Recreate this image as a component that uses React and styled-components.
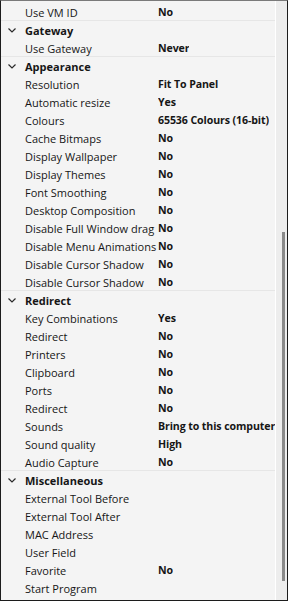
import React from "react";
import styled, { createGlobalStyle } from "styled-components";

const GlobalStyle = createGlobalStyle`
  html, body {
    margin: 0;
    padding: 0;
    background: #f4f4f4;
  }
  * {
    box-sizing: border-box;
  }
`;

const groups = [
  { title: null, rows: [["Use VM ID", "No"]] },
  { title: "Gateway", rows: [["Use Gateway", "Never"]] },
  {
    title: "Appearance",
    rows: [
      ["Resolution", "Fit To Panel"],
      ["Automatic resize", "Yes"],
      ["Colours", "65536 Colours (16-bit)"],
      ["Cache Bitmaps", "No"],
      ["Display Wallpaper", "No"],
      ["Display Themes", "No"],
      ["Font Smoothing", "No"],
      ["Desktop Composition", "No"],
      ["Disable Full Window drag", "No"],
      ["Disable Menu Animations", "No"],
      ["Disable Cursor Shadow", "No"],
      ["Disable Cursor Shadow", "No"],
    ],
  },
  {
    title: "Redirect",
    rows: [
      ["Key Combinations", "Yes"],
      ["Redirect", "No"],
      ["Printers", "No"],
      ["Clipboard", "No"],
      ["Ports", "No"],
      ["Redirect", "No"],
      ["Sounds", "Bring to this computer"],
      ["Sound quality", "High"],
      ["Audio Capture", "No"],
    ],
  },
  {
    title: "Miscellaneous",
    rows: [
      ["External Tool Before", ""],
      ["External Tool After", ""],
      ["MAC Address", ""],
      ["User Field", ""],
      ["Favorite", "No"],
      ["Start Program", ""],
    ],
  },
];

export default function App() {
  return (
    <>
      <GlobalStyle />
      <Frame>
        <Grid>
          {groups.map((group, gi) => (
            <Group key={gi} $first={gi === 0}>
              {group.title && (
                <HeaderRow>
                  <Chevron viewBox="0 0 8 5" width="8" height="5">
                    <polyline
                      points="0.5,0.5 4,4 7.5,0.5"
                      fill="none"
                      stroke="#2a2a2a"
                      strokeWidth="1.2"
                    />
                  </Chevron>
                  <HeaderText>{group.title}</HeaderText>
                </HeaderRow>
              )}
              {group.rows.map(([label, value], ri) => (
                <Row key={ri}>
                  <Label>{label}</Label>
                  <Value>{value}</Value>
                </Row>
              ))}
            </Group>
          ))}
        </Grid>
        <ScrollTrack>
          <Thumb />
        </ScrollTrack>
      </Frame>
    </>
  );
}

const Frame = styled.div`
  width: 288px;
  height: 601px;
  display: flex;
  border: 1px solid #1c1c1c;
  border-top-color: #7a7a7a;
  background: #f4f4f4;
  overflow: hidden;
  font-family: "Open Sans", "Noto Sans", sans-serif;
  font-size: 11px;
  color: #161616;
`;

const Grid = styled.div`
  flex: 1;
  min-width: 0;
  padding-top: 2px;
  overflow: hidden;
`;

const Group = styled.div`
  border-top: ${(p) => (p.$first ? "none" : "1px solid #e6e6e6")};
  & + & {
    margin-top: -1px;
  }
`;

const Row = styled.div`
  display: flex;
  align-items: center;
  height: 18px;
  white-space: nowrap;
`;

const HeaderRow = styled(Row)`
  font-weight: 700;
`;

const Chevron = styled.svg`
  margin-left: 7px;
  margin-right: 9px;
  flex: none;
`;

const HeaderText = styled.span`
  font-weight: 700;
`;

const Label = styled.span`
  width: 157px;
  padding-left: 24px;
  padding-right: 2px;
  overflow: hidden;
  flex: none;
`;

const Value = styled.span`
  font-weight: 700;
  font-size: 10.6px;
  letter-spacing: -0.1px;
  overflow: hidden;
`;

const ScrollTrack = styled.div`
  width: 12px;
  flex: none;
  background: #ededed;
  border-left: 1px solid #ffffff;
  padding: 231px 2px 19px 6px;
  display: flex;
`;

const Thumb = styled.div`
  width: 3px;
  background: #8a8a8a;
`;
